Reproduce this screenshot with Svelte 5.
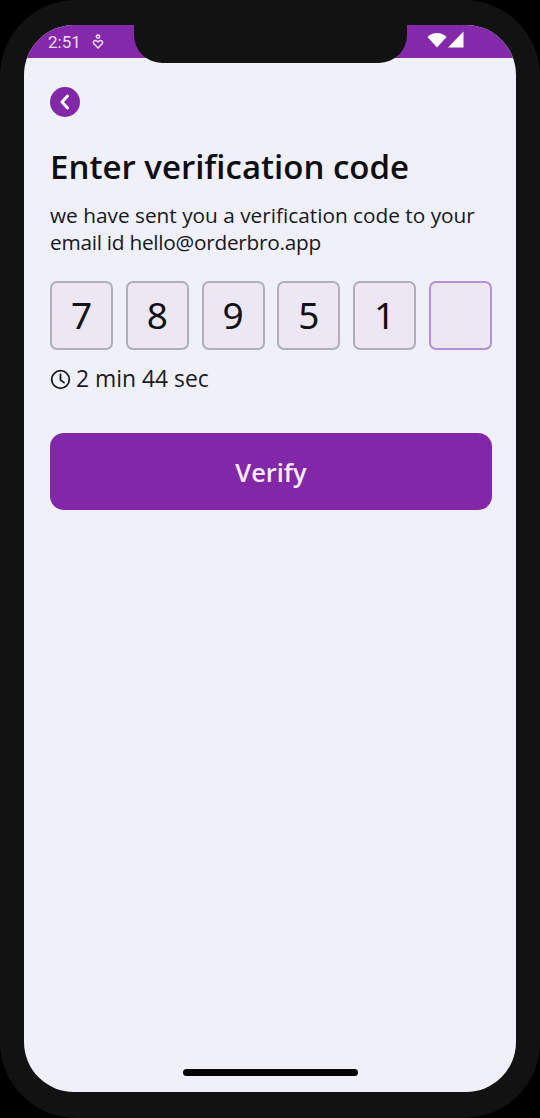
<script>
  const digits = ['7', '8', '9', '5', '1', ''];
</script>

<div class="device">
  <div class="screen">
    <div class="notch"></div>
    <div class="status">
      <div class="status-left">
        <span class="time">2:51</span>
        <svg width="12" height="16" viewBox="0 0 12 16" fill="none" stroke="#f0dcf5" stroke-width="1.5">
          <circle cx="6" cy="2.6" r="1.7" />
          <path d="M6 14 L1.9 9.7 C0.4 7.8 2.8 5.6 4.6 6.8 L6 7.9 L7.4 6.8 C9.2 5.6 11.6 7.8 10.1 9.7 Z" stroke-linejoin="round" />
        </svg>
      </div>
      <div class="status-right">
        <svg width="20" height="16" viewBox="0 0 20 16" fill="#fff"><path d="M0.5 5 C5.5 -0.4 14.5 -0.4 19.5 5 L10 15.5 Z" /></svg>
        <svg width="16" height="17" viewBox="0 0 16 17" fill="#fff"><path d="M15.5 0.5 V16.5 H0 Z" /></svg>
      </div>
    </div>

    <main class="content">
      <button class="back" aria-label="Back">
        <svg width="14" height="18" viewBox="0 0 14 18" fill="none" stroke="#fff" stroke-width="3" stroke-linecap="round" stroke-linejoin="round">
          <path d="M9.5 3 L4 9 L9.5 15" />
        </svg>
      </button>

      <h1>Enter verification code</h1>
      <p class="sub">we have sent you a verification code to your<br /><span class="email">email id hello@orderbro.app</span></p>

      <div class="code">
        {#each digits as d}
          <div class="cell" class:active={d === ''}>{d}</div>
        {/each}
      </div>

      <div class="timer">
        <svg width="21" height="21" viewBox="0 0 21 21" fill="none" stroke="#1b1b1f" stroke-width="1.8" stroke-linecap="round" stroke-linejoin="round">
          <circle cx="10.5" cy="10.5" r="8.8" />
          <path d="M10.5 5.5 V11 L14 13.6" />
        </svg>
        <span>2 min 44 sec</span>
      </div>

      <button class="verify">Verify</button>
    </main>

    <div class="home-bar"></div>
  </div>
</div>

<style>
  :global(body) {
    margin: 0;
    background: #000;
  }

  .device {
    width: 540px;
    height: 1118px;
    box-sizing: border-box;
    padding: 25px 24px 26px;
    background: #121212;
    border-radius: 76px;
    font-family: "Open Sans", "Noto Sans", sans-serif;
  }

  .screen {
    position: relative;
    height: 1067px;
    background: #eff0f9;
    border-radius: 50px;
    overflow: hidden;
    display: flex;
    flex-direction: column;
  }

  .notch {
    position: absolute;
    top: 0;
    left: 110px;
    width: 273px;
    height: 38px;
    background: #121212;
    border-radius: 0 0 28px 28px;
  }

  .status {
    height: 33px;
    flex: none;
    background: #8529ab;
    display: flex;
    justify-content: space-between;
    align-items: center;
    padding: 0 52px 0 24px;
  }

  .status-left {
    display: flex;
    align-items: center;
    gap: 11px;
    color: #f0dcf5;
  }

  .time {
    font-family: "Roboto", sans-serif;
    font-size: 17px;
  }

  .status-right {
    display: flex;
    align-items: center;
    gap: 1px;
    margin-bottom: 4px;
  }

  .content {
    flex: 1;
    padding: 29px 24px 0 26px;
    display: flex;
    flex-direction: column;
  }

  .back {
    width: 30px;
    height: 30px;
    padding: 0;
    border: 0;
    border-radius: 50%;
    background: #8127a8;
    display: flex;
    align-items: center;
    justify-content: center;
  }

  h1 {
    margin: 28px 0 0;
    font-size: 33px;
    line-height: 44px;
    font-weight: 600;
    color: #0d0d12;
  }

  .sub {
    margin: 13px 0 0;
    font-size: 20.8px;
    line-height: 27px;
    color: #17171c;
  }

  .email {
    letter-spacing: -0.26px;
  }

  .code {
    margin-top: 25px;
    display: flex;
    justify-content: space-between;
  }

  .cell {
    width: 63px;
    height: 69px;
    box-sizing: border-box;
    padding-bottom: 2px;
    border: 2px solid #b0aeb6;
    border-radius: 7px;
    background: #ece7f2;
    display: flex;
    align-items: center;
    justify-content: center;
    font-family: "Noto Sans", sans-serif;
    font-size: 37px;
    color: #121216;
  }

  .cell.active {
    border-color: #b78fd6;
  }

  .timer {
    margin-top: 15px;
    display: flex;
    align-items: center;
    gap: 5px;
    font-size: 22.9px;
    line-height: 28px;
    color: #1b1b1f;
  }

  .verify {
    margin-top: 40px;
    height: 77px;
    border: 0;
    border-radius: 14px;
    background: #8127a8;
    color: #f6ecfa;
    font-family: inherit;
    font-size: 25.4px;
    font-weight: 600;
  }

  .home-bar {
    position: absolute;
    left: 159px;
    bottom: 16px;
    width: 175px;
    height: 7px;
    border-radius: 4px;
    background: #050505;
  }
</style>
